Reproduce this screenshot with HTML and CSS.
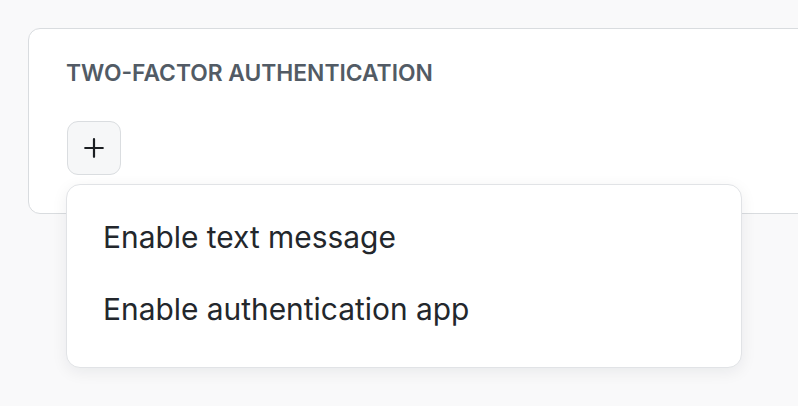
FILE: index.html
```html
<!DOCTYPE html>
<html>
<head>
<meta charset="utf-8">
<link rel="stylesheet" href="styles.css">
</head>
<body>
<div class="page">
  <section class="card">
    <h2 class="card-title">Two-factor authentication</h2>
    <div class="menu-anchor">
      <button class="add-btn" aria-label="Add">
        <svg width="20" height="20" viewBox="0 0 20 20" fill="none" stroke="#1b1e22" stroke-width="2.2" stroke-linecap="round"><path d="M10 1.2v17.6M1.2 10h17.6"/></svg>
      </button>
      <ul class="menu">
        <li class="menu-item">Enable text message</li>
        <li class="menu-item">Enable authentication app</li>
      </ul>
    </div>
  </section>
</div>
</body>
</html>
```

FILE: styles.css
```css
html, body {
  margin: 0;
  padding: 0;
  background: #f9f9fa;
  font-family: Inter, "Noto Sans", sans-serif;
}
.page {
  padding: 28px 0 0 28px;
  width: 798px;
  height: 406px;
  box-sizing: border-box;
  overflow: hidden;
}
.card {
  background: #fff;
  border: 1.5px solid #d9dcdf;
  border-radius: 12px;
  padding: 30px 37px 37px 37px;
  box-sizing: border-box;
  height: 186px;
  width: 820px;
}
.card-title {
  margin: 0;
  font-size: 22.8px;
  line-height: 28px;
  font-weight: 600;
  text-transform: uppercase;
  color: #525b65;
}
.menu-anchor {
  position: relative;
  margin-top: 33.5px;
}
.add-btn {
  width: 54px;
  height: 54px;
  border: 1.5px solid #dadde0;
  background: #f6f7f8;
  border-radius: 11px;
  display: flex;
  align-items: center;
  justify-content: center;
  padding: 0;
  margin-left: 1px;
}
.menu {
  position: absolute;
  left: 0;
  top: 63px;
  width: 676px;
  height: 184px;
  box-sizing: border-box;
  margin: 0;
  padding: 16.5px 0;
  list-style: none;
  background: #fff;
  border: 1.5px solid #e1e3e6;
  border-radius: 14px;
  box-shadow: 0 4px 16px rgba(20, 30, 40, 0.07);
}
.menu-item {
  padding: 0 36px;
  height: 72px;
  line-height: 72px;
  font-size: 29.9px;
  color: #23272c;
}
```
